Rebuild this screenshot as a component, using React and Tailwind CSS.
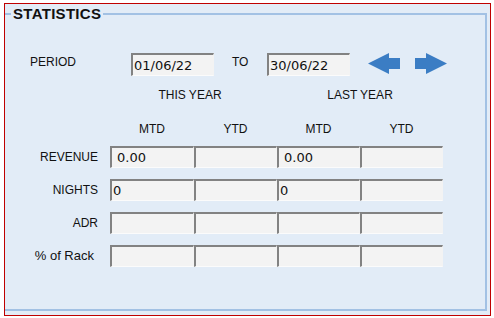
import React from "react";

const cell =
  "h-[22px] bg-[#f3f3f3] border-t-2 border-l-2 border-b border-r border-t-[#828282] border-l-[#828282] border-b-[#fbfbfb] border-r-[#f3f3f3] flex items-center text-[13px] text-[#111] leading-none";

function Arrow({ dir }) {
  return (
    <svg width="32" height="21" viewBox="0 0 32 21" className={dir === "right" ? "-scale-x-100" : ""}>
      <polygon points="0,10.5 21,0 21,5 32,5 32,16 21,16 21,21" fill="#3b7dc4" />
    </svg>
  );
}

const rows = [
  { label: "REVENUE", v1: "0.00", v3: "0.00", pad: "pl-[5px]" },
  { label: "NIGHTS", v1: "0", v3: "0", pad: "pl-[1px]" },
  { label: "ADR", v1: "", v3: "", pad: "" },
  { label: "% of Rack", v1: "", v3: "", pad: "", small: true },
];

export default function App() {
  return (
    <div
      className="w-[494px] h-[318px] bg-white pt-[3px] pl-[4px] text-[#111]"
      style={{ fontFamily: '"Liberation Sans", Arial, sans-serif' }}
    >
      <div className="w-[487px] h-[313px] border border-[#c00000] bg-[#e2ecf7] pt-[9px] pr-[3px]">
        <div className="relative h-[298px] border-t-2 border-r-2 border-b-2 border-[#a2c1e4]">
          <div className="absolute left-[6px] top-[-10px] px-[2px] bg-[#e2ecf7] font-bold text-[15px] leading-[18px] tracking-[0.3px] text-[#111]">
            STATISTICS
          </div>

          {/* Period row */}
          <div className="flex items-center mt-[38px] h-[23px] text-[12px]">
            <div className="ml-[25px] w-[101px] mt-[-6px]">PERIOD</div>
            <div className={`${cell} w-[83px] h-[23px] pl-[1px]`} style={{ fontFamily: '"DejaVu Sans", sans-serif' }}>
              01/06/22
            </div>
            <div className="ml-[18px] w-[35px] mt-[-6px]">TO</div>
            <div className={`${cell} w-[83px] h-[23px] pl-[1px]`} style={{ fontFamily: '"DejaVu Sans", sans-serif' }}>
              30/06/22
            </div>
            <div className="ml-[18px] flex items-center gap-[15px] mt-[-2px]">
              <Arrow dir="left" />
              <Arrow dir="right" />
            </div>
          </div>

          {/* Year headers */}
          <div className="grid grid-cols-[105px_167px_166px] mt-[11px] h-[16px] text-[12px] leading-[16px]">
            <div />
            <div className="text-center pr-[7px]">THIS YEAR</div>
            <div className="text-center">LAST YEAR</div>
          </div>

          {/* MTD/YTD headers */}
          <div className="grid grid-cols-[105px_84px_83px_83px_83px] mt-[18px] h-[16px] text-[12px] leading-[16px]">
            <div />
            <div className="text-center">MTD</div>
            <div className="text-center">YTD</div>
            <div className="text-center">MTD</div>
            <div className="text-center">YTD</div>
          </div>

          {/* Data rows */}
          <div className="flex flex-col gap-[11px] mt-[9px]">
            {rows.map((r) => (
              <div key={r.label} className="grid grid-cols-[105px_84px_83px_83px_83px] items-center">
                <div className={`text-right ${r.small ? "text-[13px] pr-[16px]" : "text-[12px] pr-[12px]"}`}>{r.label}</div>
                <div className={`${cell} ${r.pad}`} style={{ fontFamily: '"DejaVu Sans", sans-serif' }}>{r.v1}</div>
                <div className={cell} />
                <div className={`${cell} ${r.pad}`} style={{ fontFamily: '"DejaVu Sans", sans-serif' }}>{r.v3}</div>
                <div className={cell} />
              </div>
            ))}
          </div>
        </div>
      </div>
    </div>
  );
}
